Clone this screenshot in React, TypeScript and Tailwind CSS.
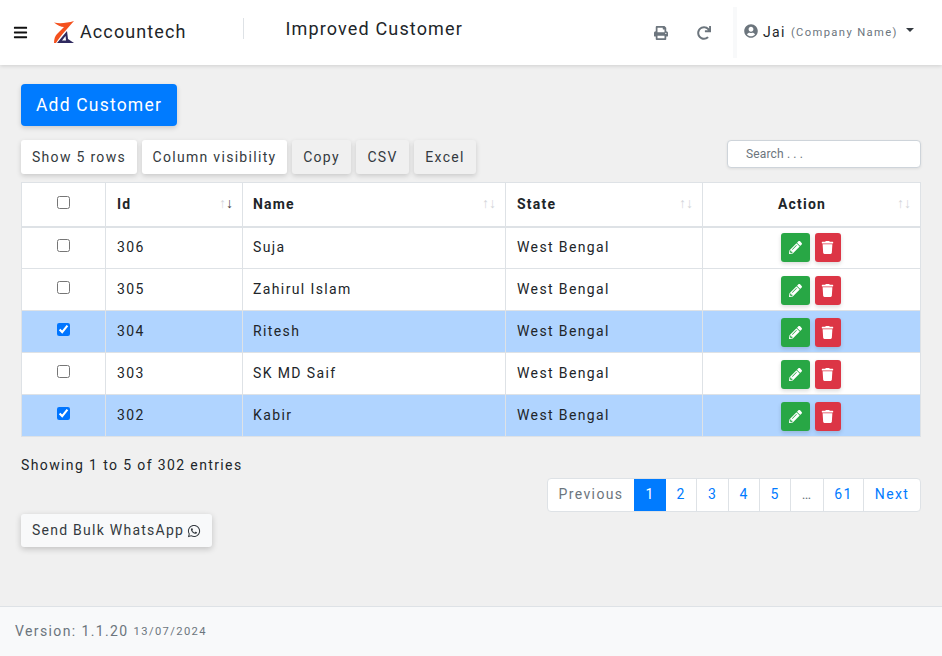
import { FaBars, FaPencilAlt, FaPrint, FaRedo, FaTrash, FaUserCircle, FaWhatsapp } from 'react-icons/fa';

const rows = [
  { id: 306, name: 'Suja', state: 'West Bengal', checked: false },
  { id: 305, name: 'Zahirul Islam', state: 'West Bengal', checked: false },
  { id: 304, name: 'Ritesh', state: 'West Bengal', checked: true },
  { id: 303, name: 'SK MD Saif', state: 'West Bengal', checked: false },
  { id: 302, name: 'Kabir', state: 'West Bengal', checked: true },
];

function Logo() {
  return (
    <svg width="22" height="23" viewBox="0 0 22 23" className="shrink-0">
      <path d="M1 1.5 C7 3 14 2 21 0 C16 6 8 14 3 22 L1 22 C1 18 2 15 4 13 L11 6 C8 6 4 4 1 1.5 Z" fill="#f4511e" />
      <path d="M4 22 L14 10 L15 18 L21 22 Z M9 19.5 L13 19.5 L12.6 15 Z" fill="#2f2a5f" fillRule="evenodd" />
    </svg>
  );
}

function SortArrows({ active }: { active?: boolean }) {
  return (
    <span className="absolute right-[9px] top-[12px] text-[14px] leading-[16px] tracking-[0px] font-normal text-[#d3d6da]">
      ↑<span className={active ? 'text-[#444]' : ''}>↓</span>
    </span>
  );
}

function ToolButton({ label, className }: { label: string; className: string }) {
  return (
    <button className={`h-[34px] rounded-[3px] text-center text-[14px] tracking-[1.3px] text-[#343a40] shadow-[0_2px_5px_rgba(0,0,0,0.16)] ${className}`}>
      {label}
    </button>
  );
}

function PageLink({ label, className }: { label: string; className?: string }) {
  return (
    <a className={`flex h-full items-center justify-center border-l border-[#dee2e6] pb-[2px] text-[14px] ${className ?? ''}`}>
      {label}
    </a>
  );
}

export default function App() {
  return (
    <div className="flex h-[656px] flex-col overflow-hidden bg-[#f0f0f0] font-['Roboto',sans-serif] tracking-[1.38px] text-[#212529]">
      <header className="z-10 flex h-[65px] shrink-0 items-center bg-white shadow-[0_1px_4px_rgba(0,0,0,0.14)]">
        <FaBars className="ml-[13px] text-[15px] text-[#111]" />
        <div className="ml-[25px] flex items-center gap-[5px]">
          <Logo />
          <span className="-translate-y-[1px] text-[18px] leading-none tracking-[1.1px]">Accountech</span>
        </div>
        <div className="ml-[57px] h-[21px] w-px -translate-y-[4px] bg-[#dee2e6]" />
        <h1 className="ml-[41px] -translate-y-[4px] text-[18px] font-normal leading-none tracking-[1.15px]">Improved Customer</h1>
        <FaPrint className="ml-[191px] text-[14px] text-[#6c757d]" />
        <FaRedo className="ml-[29px] text-[14px] text-[#6c757d]" />
        <div className="ml-[22px] h-[51px] w-[4px] bg-[#f8f9fa]" />
        <div className="ml-[7px] flex -translate-y-[2px] items-center">
          <FaUserCircle className="text-[14px] text-[#6c757d]" />
          <span className="ml-[5px] translate-y-[1px] text-[14px] leading-none">Jai</span>
          <span className="ml-[5px] translate-y-[2px] text-[11.2px] leading-none text-[#6c757d]">(Company Name)</span>
          <span className="ml-[8px] mb-[1px] h-0 w-0 border-x-[4.5px] border-t-[4.5px] border-x-transparent border-t-[#343a40]" />
        </div>
      </header>

      <main className="flex-1 px-[21px] pt-[19px]">
        <button className="h-[42px] w-[156px] rounded-[4px] bg-[#007bff] text-[17.5px] tracking-[1.2px] text-white shadow-[0_2px_5px_rgba(0,0,0,0.16)]">
          Add Customer
        </button>

        <div className="mt-[14px] flex items-start gap-[5px]">
          <ToolButton label="Show 5 rows" className="w-[116px] bg-white" />
          <ToolButton label="Column visibility" className="w-[145px] bg-white" />
          <ToolButton label="Copy" className="w-[59px] bg-[#f0f0f0]" />
          <ToolButton label="CSV" className="w-[53px] bg-[#f0f0f0]" />
          <ToolButton label="Excel" className="w-[62px] bg-[#f0f0f0]" />
          <input
            placeholder="Search . . ."
            className="ml-auto h-[28px] w-[194px] rounded-[4px] border border-[#ced4da] bg-white pl-[18px] text-[12px] tracking-[0.15px] shadow-[0_1px_3px_rgba(0,0,0,0.08)] outline-none placeholder:text-[#6c757d]"
          />
        </div>

        <table className="mt-[8px] w-[900px] table-fixed border-collapse border border-[#dee2e6] bg-white text-[14px]">
          <colgroup>
            <col className="w-[84px]" />
            <col className="w-[137px]" />
            <col className="w-[263px]" />
            <col className="w-[197px]" />
            <col />
          </colgroup>
          <thead>
            <tr className="h-[44px] border-b-2 border-[#dee2e6]">
              <th className="relative border border-[#dee2e6] text-center">
                <input type="checkbox" className="mx-auto block h-[13px] w-[13px] -translate-y-[2px]" />
              </th>
              <th className="relative border border-[#dee2e6] pl-[11px] text-left font-bold tracking-[1.2px]">Id<SortArrows active /></th>
              <th className="relative border border-[#dee2e6] pl-[10px] text-left font-bold tracking-[1.2px]">Name<SortArrows /></th>
              <th className="relative border border-[#dee2e6] pl-[11px] text-left font-bold tracking-[1.2px]">State<SortArrows /></th>
              <th className="relative border border-[#dee2e6] pr-[19px] text-center font-bold tracking-[1.2px]">Action<SortArrows /></th>
            </tr>
          </thead>
          <tbody>
            {rows.map((row, i) => (
              <tr key={row.id} className={`h-[42px] ${row.checked ? 'bg-[#b0d4ff]' : 'bg-white'}`}>
                <td className="border border-[#dee2e6]">
                  <input type="checkbox" defaultChecked={row.checked} className="mx-auto block h-[13px] w-[13px] -translate-y-[2px] accent-[#0075ff]" />
                </td>
                <td className="border border-[#dee2e6] pl-[11px]">{row.id}</td>
                <td className="border border-[#dee2e6] pl-[10px]">{row.name}</td>
                <td className="border border-[#dee2e6] pl-[11px]">{row.state}</td>
                <td className="border border-[#dee2e6] pr-[2px]">
                  <div className={`flex justify-center gap-[5px] ${i > 0 ? 'translate-y-[1px]' : ''}`}>
                    <button className="flex h-[29px] w-[29px] items-center justify-center rounded-[3px] bg-[#28a745] text-white shadow-[0_2px_4px_rgba(0,0,0,0.14)]">
                      <FaPencilAlt className="text-[13px]" />
                    </button>
                    <button className="flex h-[29px] w-[26px] items-center justify-center rounded-[3px] bg-[#dc3545] text-white shadow-[0_2px_4px_rgba(0,0,0,0.14)]">
                      <FaTrash className="text-[13px]" />
                    </button>
                  </div>
                </td>
              </tr>
            ))}
          </tbody>
        </table>

        <p className="mt-[18px] text-[14px] leading-[21px]">Showing 1 to 5 of 302 entries</p>

        <nav className="ml-auto mt-[2px] flex h-[34px] w-[374px] overflow-hidden rounded-[4px] border border-[#dee2e6] bg-white text-[#007bff]">
          <a className="flex h-full w-[86px] items-center justify-center pb-[2px] text-[14px] text-[#6c757d]">Previous</a>
          <a className="flex h-full w-[32px] items-center justify-center bg-[#007bff] pb-[2px] text-[14px] text-white">1</a>
          <PageLink label="2" className="w-[30px] border-l-0" />
          <PageLink label="3" className="w-[32px]" />
          <PageLink label="4" className="w-[31px]" />
          <PageLink label="5" className="w-[31px]" />
          <PageLink label="…" className="w-[33px] text-[#6c757d]" />
          <PageLink label="61" className="w-[40px]" />
          <PageLink label="Next" className="flex-1" />
        </nav>

        <button className="mt-[2px] flex h-[33px] items-center gap-[3px] rounded-[3px] bg-[#f8f9fa] px-[11px] text-[14px] tracking-[1.25px] text-[#343a40] shadow-[0_2px_6px_rgba(0,0,0,0.2)]">
          Send Bulk WhatsApp <FaWhatsapp className="text-[14px]" />
        </button>
      </main>

      <footer className="flex h-[50px] shrink-0 items-center border-t border-[#dee2e6] bg-[#f8f9fa] pl-[15px] text-[#6c757d]">
        <span className="text-[14px]">Version: 1.1.20</span>
        <span className="ml-[5px] translate-y-[1px] text-[11.2px]">13/07/2024</span>
      </footer>
    </div>
  );
}
